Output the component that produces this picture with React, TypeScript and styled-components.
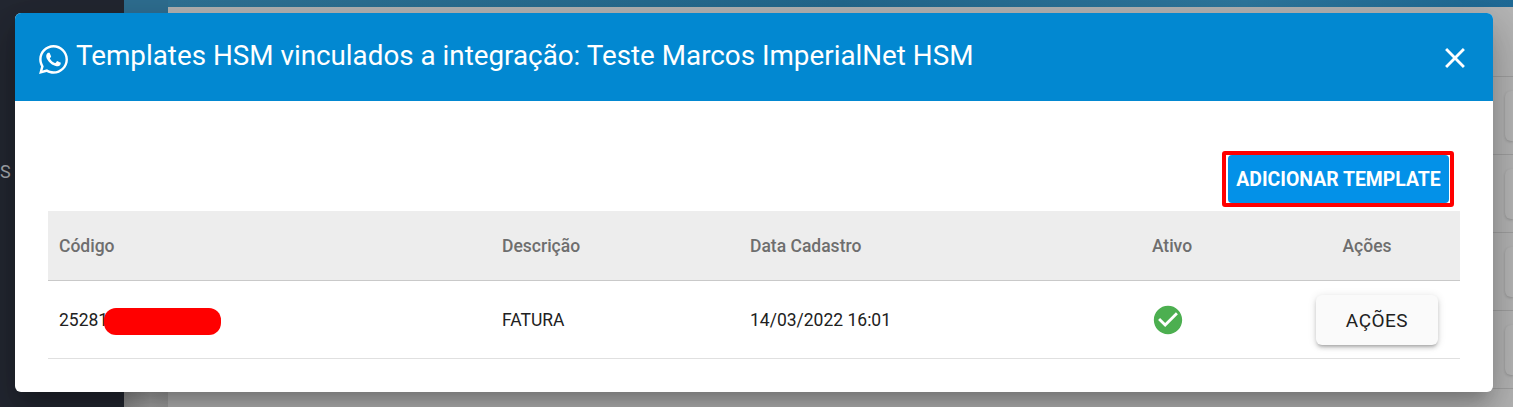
import React from 'react';
import styled, { createGlobalStyle } from 'styled-components';
import { FaWhatsapp } from 'react-icons/fa';
import { MdCheckCircle, MdClose } from 'react-icons/md';

const rows = [
  {
    codigo: '25281',
    descricao: 'FATURA',
    dataCadastro: '14/03/2022 16:01',
  },
];

function App() {
  return (
    <Page>
      <GlobalStyle />
      <Sidebar>
        <SidebarLabel>S</SidebarLabel>
      </Sidebar>
      <Gutter />
      <Main>
        <TopBar />
        <Content>
          <BackHead />
          {[0, 1, 2, 3].map((i) => (
            <BackRow key={i}>
              <BackButton />
            </BackRow>
          ))}
        </Content>
      </Main>
      <Dialog>
        <DialogHeader>
          <Title>
            <FaWhatsapp size={33} />
            <span>Templates HSM vinculados a integração: Teste Marcos ImperialNet HSM</span>
          </Title>
          <CloseButton aria-label="Fechar">
            <MdClose size={34} />
          </CloseButton>
        </DialogHeader>
        <DialogBody>
          <Actions>
            <Highlight>
              <AddButton>Adicionar template</AddButton>
            </Highlight>
          </Actions>
          <Table>
            <colgroup>
              <col width={443} />
              <col width={248} />
              <col width={331} />
              <col width={204} />
              <col width={186} />
            </colgroup>
            <thead>
              <tr>
                <Th>Código</Th>
                <Th>Descrição</Th>
                <Th>Data Cadastro</Th>
                <Th $center>Ativo</Th>
                <Th $center>Ações</Th>
              </tr>
            </thead>
            <tbody>
              {rows.map((row) => (
                <tr key={row.codigo}>
                  <Td>
                    {row.codigo}
                    <Redaction />
                  </Td>
                  <Td>{row.descricao}</Td>
                  <Td>{row.dataCadastro}</Td>
                  <Td $center>
                    <ActiveIcon>
                      <MdCheckCircle size={34} />
                    </ActiveIcon>
                  </Td>
                  <Td $center>
                    <MenuButton>Ações</MenuButton>
                  </Td>
                </tr>
              ))}
            </tbody>
          </Table>
        </DialogBody>
      </Dialog>
    </Page>
  );
}

const GlobalStyle = createGlobalStyle`
  html, body {
    margin: 0;
    padding: 0;
    overflow: hidden;
  }
  body {
    font-family: Roboto, "Liberation Sans", sans-serif;
  }
`;

const Page = styled.div`
  position: relative;
  display: flex;
  width: 1513px;
  height: 407px;
  overflow: hidden;
  background: #b3b3b3;
`;

const Sidebar = styled.aside`
  width: 124px;
  flex-shrink: 0;
  display: flex;
  align-items: center;
  background: #232731;
  color: #a8abb0;
  font-size: 18px;
`;

const SidebarLabel = styled.span`
  margin-bottom: 64px;
`;

const Gutter = styled.div`
  width: 44px;
  flex-shrink: 0;
  background: linear-gradient(180deg, #2f6f92, #2f6f92 14px, transparent 14px),
    linear-gradient(90deg, #8f8f8f, #a6a6a6 60%, #a0a0a0);
`;

const Main = styled.main`
  flex: 1;
  display: flex;
  flex-direction: column;
`;

const TopBar = styled.div`
  height: 7px;
  flex-shrink: 0;
  background: linear-gradient(100deg, #2f7396, #24698f 50%, #2e789f 80%, #1f6a96);
`;

const Content = styled.div`
  flex: 1;
  display: flex;
  flex-direction: column;
  background: #b5b5b5;
`;

const BackHead = styled.div`
  height: 70px;
  flex-shrink: 0;
  box-sizing: border-box;
  border-bottom: 1px solid #a0a0a0;
`;

const BackRow = styled.div`
  height: 78px;
  flex-shrink: 0;
  box-sizing: border-box;
  display: flex;
  justify-content: flex-end;
  align-items: center;
  border-bottom: 1px solid #a0a0a0;
`;

const BackButton = styled.div`
  width: 8px;
  height: 50px;
  border-radius: 6px 0 0 6px;
  background: #b7b7b7;
  box-shadow: 0 1px 3px rgba(0, 0, 0, 0.2);
`;

const Dialog = styled.section`
  position: absolute;
  top: 13px;
  left: 15px;
  width: 1478px;
  height: 379px;
  display: flex;
  flex-direction: column;
  overflow: hidden;
  border-radius: 6px;
  background: #fff;
  box-shadow: 0 11px 15px -7px rgba(0, 0, 0, 0.2), 0 24px 38px 3px rgba(0, 0, 0, 0.14),
    0 9px 46px 8px rgba(0, 0, 0, 0.12);
`;

const DialogHeader = styled.header`
  height: 88px;
  flex-shrink: 0;
  display: flex;
  align-items: center;
  justify-content: space-between;
  padding: 0 21px 0 22px;
  background: #0288d1;
  color: #fff;
`;

const Title = styled.h2`
  display: flex;
  align-items: center;
  gap: 6px;
  margin: 0;
  font-size: 27.8px;
  font-weight: 400;
  line-height: 32px;

  svg {
    margin-top: 5px;
  }
  span {
    margin-bottom: 2px;
  }
`;

const CloseButton = styled.button`
  display: flex;
  margin-top: 2px;
  padding: 0;
  border: 0;
  background: none;
  color: #fff;
`;

const DialogBody = styled.div`
  flex: 1;
  padding: 50px 33px 0;
`;

const Actions = styled.div`
  display: flex;
  justify-content: flex-end;
  margin-right: 6px;
  margin-bottom: 4px;
`;

const Highlight = styled.div`
  display: flex;
  padding: 0 1px 0 2px;
  border: 4px solid #f00;
  border-radius: 3px;
`;

const AddButton = styled.button`
  width: 221px;
  height: 48px;
  padding: 0;
  border: 0;
  border-radius: 4px;
  background: #0391e8;
  color: #fff;
  font-family: inherit;
  font-size: 19.4px;
  font-weight: 700;
  text-transform: uppercase;
`;

const Table = styled.table`
  width: 1412px;
  table-layout: fixed;
  border-collapse: collapse;
`;

const Th = styled.th<{ $center?: boolean }>`
  height: 69px;
  padding: 1px 11px 0;
  box-sizing: border-box;
  border-bottom: 1px solid #c9c9c9;
  background: #ededed;
  color: #6e6e6e;
  font-size: 17.5px;
  font-weight: 500;
  text-align: ${(p) => (p.$center ? 'center' : 'left')};
`;

const Td = styled.td<{ $center?: boolean }>`
  position: relative;
  height: 78px;
  padding: 2px 11px 0;
  box-sizing: border-box;
  border-bottom: 1px solid #e0e0e0;
  color: #212121;
  font-size: 17.5px;
  text-align: ${(p) => (p.$center ? 'center' : 'left')};
`;

const Redaction = styled.span`
  position: absolute;
  top: 27px;
  left: 56px;
  width: 117px;
  height: 27px;
  border-radius: 12px;
  background: #f00;
`;

const ActiveIcon = styled.span`
  display: inline-flex;
  vertical-align: middle;
  margin-right: 8px;
  color: #4caf50;
`;

const MenuButton = styled.button`
  width: 122px;
  height: 50px;
  margin-left: 20px;
  padding: 0;
  border: 0;
  border-radius: 6px;
  background: #fafafa;
  color: #212121;
  font-family: inherit;
  font-size: 19px;
  font-weight: 400;
  letter-spacing: 0.5px;
  text-transform: uppercase;
  vertical-align: middle;
  box-shadow: 0 3px 3px -2px rgba(0, 0, 0, 0.2), 0 3px 4px 0 rgba(0, 0, 0, 0.14),
    0 1px 8px 0 rgba(0, 0, 0, 0.12);
`;

export default App;
